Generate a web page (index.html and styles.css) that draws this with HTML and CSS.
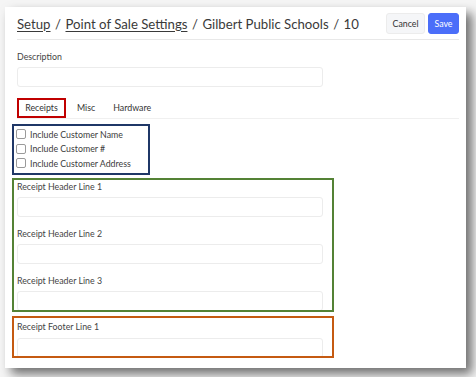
FILE: index.html
```html
<!DOCTYPE html>
<html>
<head>
<meta charset="utf-8">
<link rel="stylesheet" href="styles.css">
</head>
<body>
<div class="card">
  <div class="header">
    <h1 class="title"><a class="crumb">Setup</a><span class="sep">/</span><a class="crumb">Point of Sale Settings</a><span class="sep">/</span>Gilbert Public Schools<span class="sep">/</span>10</h1>
    <div class="actions">
      <button class="btn btn-cancel">Cancel</button>
      <button class="btn btn-save">Save</button>
    </div>
  </div>

  <div class="field field-desc">
    <label class="label">Description</label>
    <div class="input input-desc"></div>
  </div>

  <div class="tabs">
    <div class="tab tab-active">Receipts</div>
    <div class="tab">Misc</div>
    <div class="tab">Hardware</div>
  </div>

  <div class="box box-blue">
    <label class="check"><span class="cb"></span>Include Customer Name</label>
    <label class="check"><span class="cb"></span>Include Customer #</label>
    <label class="check"><span class="cb"></span>Include Customer Address</label>
  </div>

  <div class="box box-green">
    <div class="field">
      <label class="label">Receipt Header Line 1</label>
      <div class="input"></div>
    </div>
    <div class="field">
      <label class="label">Receipt Header Line 2</label>
      <div class="input"></div>
    </div>
    <div class="field">
      <label class="label">Receipt Header Line 3</label>
      <div class="input"></div>
    </div>
  </div>

  <div class="box box-orange">
    <div class="field">
      <label class="label">Receipt Footer Line 1</label>
      <div class="input"></div>
    </div>
  </div>
</div>
</body>
</html>
```

FILE: styles.css
```css
html, body {
  margin: 0;
  padding: 0;
}
body {
  width: 476px;
  height: 377px;
  overflow: hidden;
  background: #f5f5f5;
  font-family: "Lato", "Open Sans", sans-serif;
  color: #3b3b3b;
}
.card {
  margin: 7px 0 0 5px;
  width: 461px;
  height: 361px;
  box-sizing: border-box;
  padding: 0 7px 0 12px;
  background: #fff;
  box-shadow: 6px 6px 10px rgba(0, 0, 0, 0.55);
  overflow: hidden;
}
.header {
  display: flex;
  align-items: center;
  justify-content: space-between;
  height: 33px;
  border-bottom: 1px solid #e8e8e8;
  box-sizing: border-box;
  padding-top: 1px;
}
.title {
  margin: 0;
  font-size: 13.2px;
  font-weight: 400;
  color: #3a3a3a;
  white-space: nowrap;
}
.crumb {
  color: #3a3a3a;
  text-decoration: underline;
  text-underline-offset: 2px;
  text-decoration-thickness: 1px;
}
.sep {
  margin: 0 4.5px;
}
.actions {
  display: flex;
  gap: 3px;
  align-items: center;
  flex-shrink: 0;
}
.btn {
  height: 21px;
  border-radius: 3px;
  font-family: inherit;
  font-size: 8.8px;
  padding: 0;
  border: 1px solid #ececec;
}
.btn-cancel {
  width: 39px;
  background: #f5f6f8;
  color: #333;
}
.btn-save {
  width: 31px;
  background: #4b6ef9;
  border-color: #4b6ef9;
  color: #fff;
}
.field {
  display: flex;
  flex-direction: column;
}
.label {
  font-size: 8.8px;
  color: #444;
  line-height: 12px;
}
.input {
  width: 306px;
  height: 20px;
  box-sizing: border-box;
  border: 1px solid #ececec;
  border-radius: 3px;
  background: #fff;
  margin-top: 4px;
}
.field-desc {
  margin-top: 11px;
}
.tabs {
  display: flex;
  align-items: center;
  margin-top: 11px;
  height: 20px;
  border-bottom: 1px solid #f0f0f0;
  font-size: 8.8px;
  color: #333;
}
.tab {
  padding: 0 7px;
  line-height: 16px;
  border: 2px solid transparent;
}
.tab-active {
  border-color: #c00000;
  width: 49px;
  box-sizing: border-box;
  text-align: center;
  padding: 0;
  height: 20px;
  margin-right: 2px;
}
.box {
  box-sizing: border-box;
  margin-left: -5px;
  border: 2px solid;
}
.box-blue {
  margin-top: 5px;
  width: 138px;
  height: 51px;
  border-color: #1f3767;
  padding: 1px 0 0 2px;
}
.check {
  display: flex;
  align-items: center;
  gap: 4px;
  font-size: 8.8px;
  color: #3b3b3b;
  height: 14.5px;
}
.cb {
  width: 10px;
  height: 10px;
  box-sizing: border-box;
  border: 1px solid #9a9a9a;
  border-radius: 2px;
  background: #fff;
}
.box-green {
  margin-top: 3px;
  width: 322px;
  height: 134px;
  border-color: #548235;
  padding: 1px 0 0 3px;
  overflow: hidden;
}
.box-green .field + .field {
  margin-top: 11px;
}
.box-orange {
  margin-top: 4px;
  width: 322px;
  height: 42px;
  border-color: #c55a11;
  padding: 3px 0 0 3px;
  overflow: hidden;
}
.box-orange .input {
  margin-top: 5px;
}
```
